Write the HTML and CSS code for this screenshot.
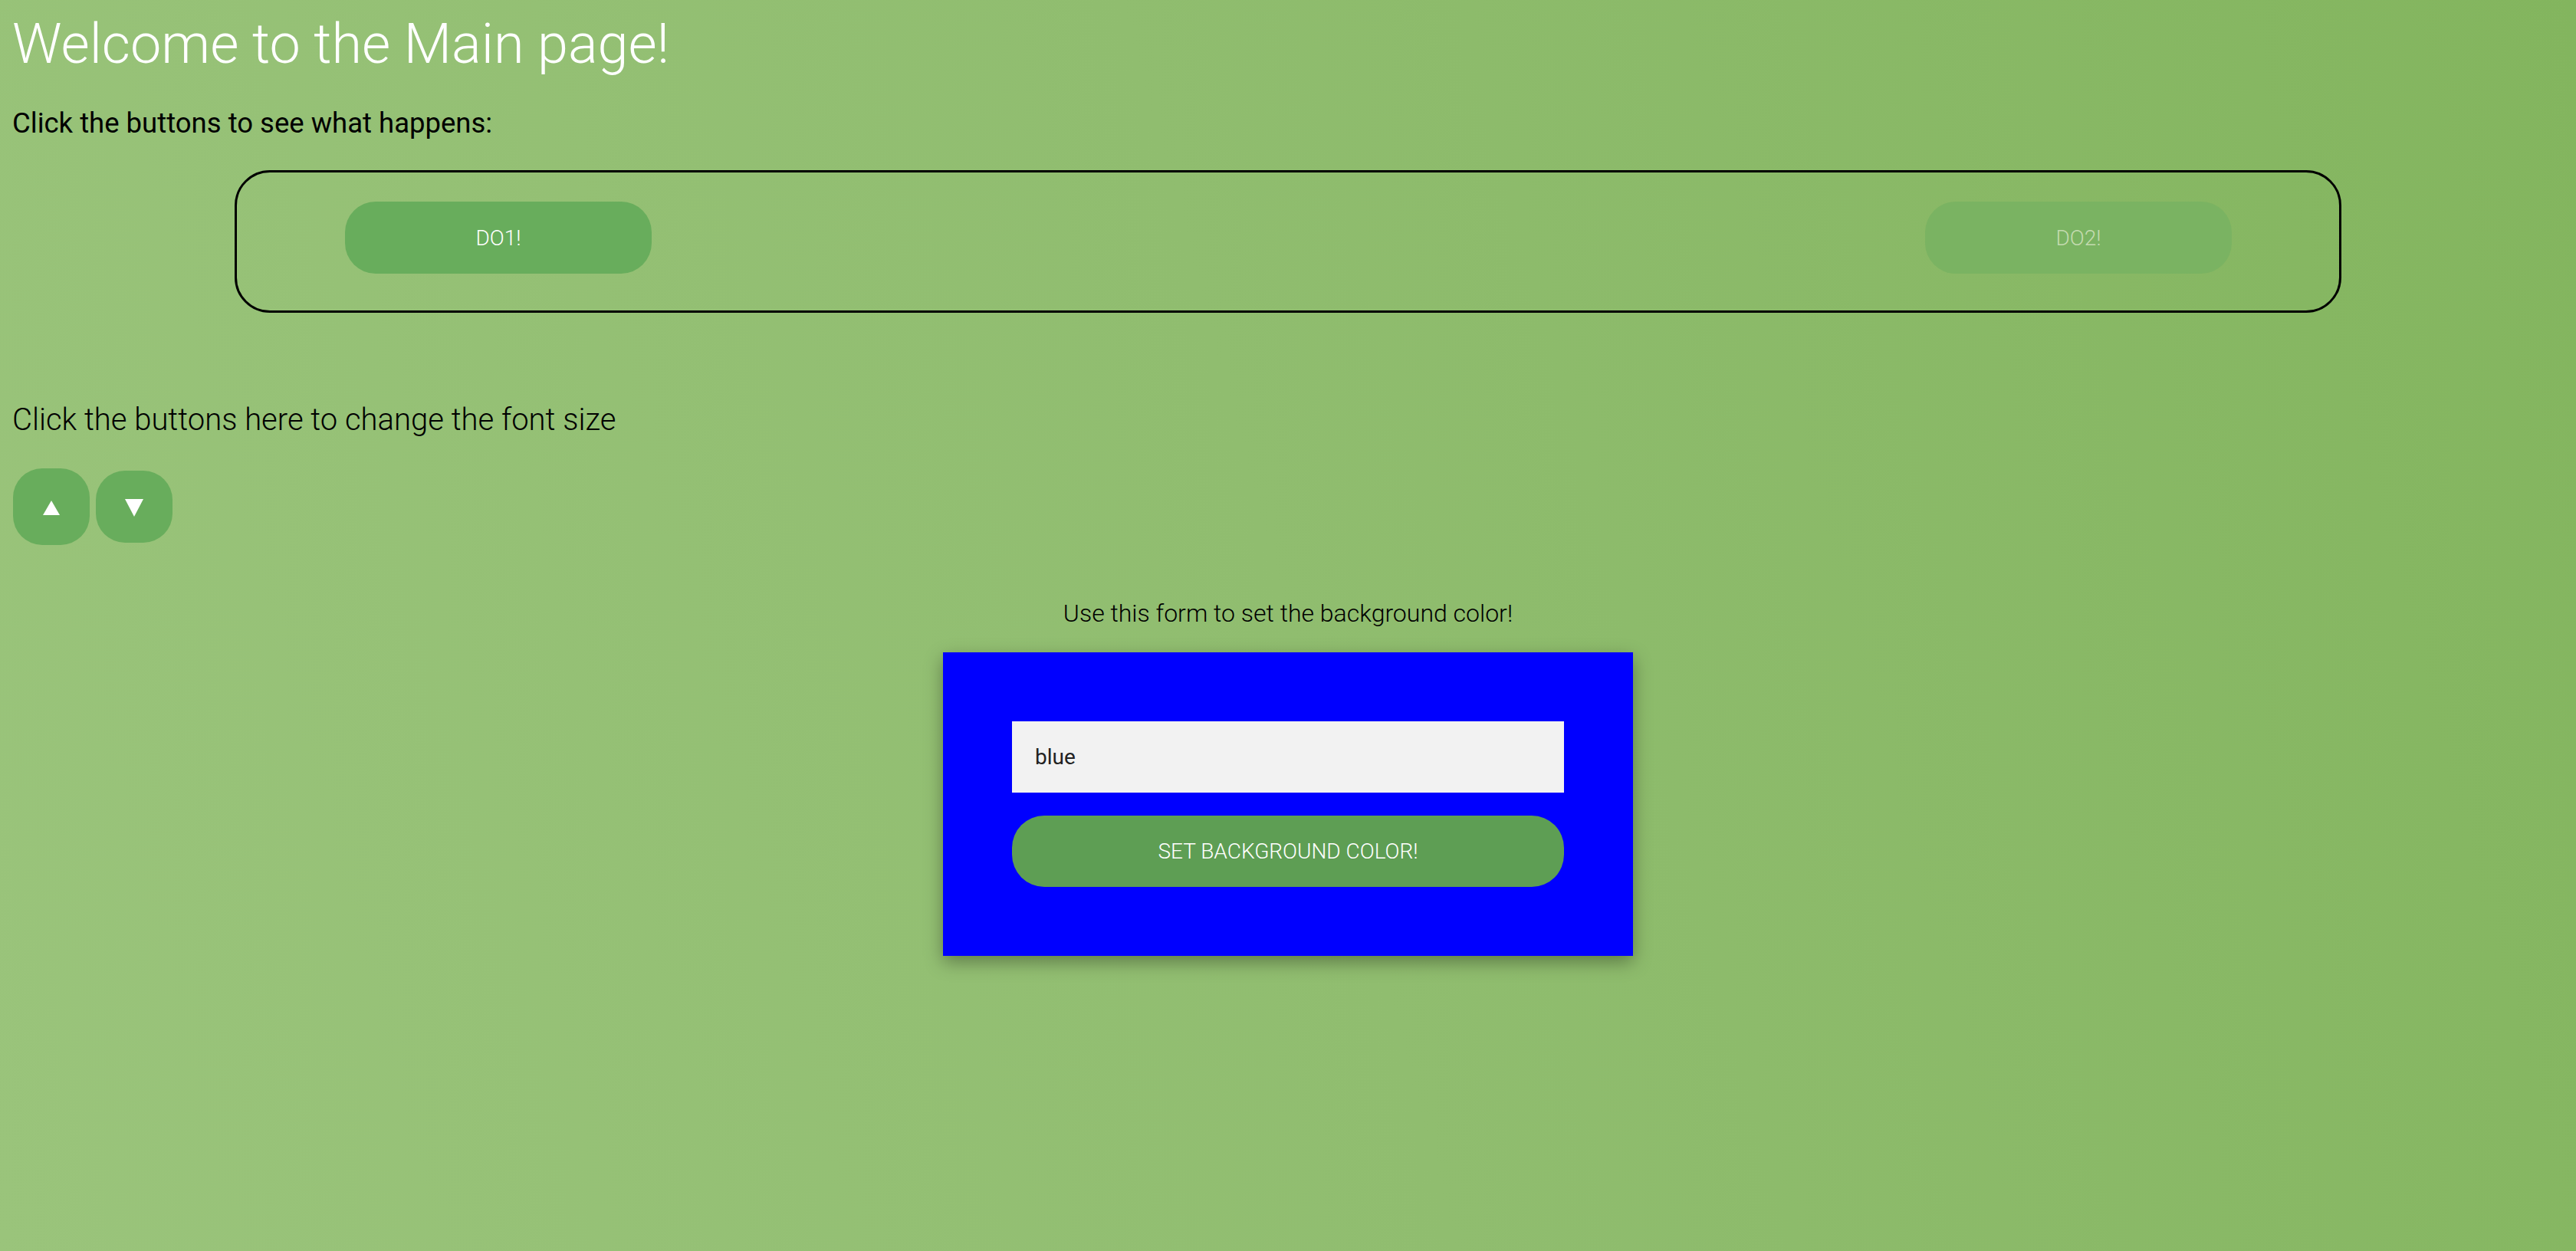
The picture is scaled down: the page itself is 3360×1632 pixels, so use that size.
FILE: index.html
```html
<!DOCTYPE html>
<html lang="en">
<head>
<meta charset="utf-8">
<title>Main page</title>
<link rel="stylesheet" href="styles.css">
</head>
<body>
<main class="page">
  <h1 class="title">Welcome to the Main page!</h1>
  <p class="intro">Click the buttons to see what happens:</p>
  <div class="do-box">
    <button class="do-btn">DO1!</button>
    <button class="do-btn do-btn--disabled" disabled>DO2!</button>
  </div>
  <p class="font-label">Click the buttons here to change the font size</p>
  <div class="size-btns">
    <button class="size-btn size-btn--up" aria-label="Increase font size">
      <svg width="22" height="19" viewBox="0 0 22 19"><polygon points="11,0 22,19 0,19" fill="#fff"/></svg>
    </button>
    <button class="size-btn size-btn--down" aria-label="Decrease font size">
      <svg width="24" height="23" viewBox="0 0 24 23"><polygon points="0,0 24,0 12,23" fill="#fff"/></svg>
    </button>
  </div>
  <section class="color-section">
    <p class="form-label">Use this form to set the background color!</p>
    <form class="color-form">
      <input class="color-input" type="text" value="blue">
      <button class="color-btn" type="button">SET BACKGROUND COLOR!</button>
    </form>
  </section>
</main>
</body>
</html>
```

FILE: styles.css
```css
html, body {
  margin: 0;
  padding: 0;
}
body {
  min-height: 1632px;
  background: linear-gradient(75deg, #9ac47b 0%, #90bd6f 50%, #83b55e 100%);
  font-family: Roboto, "Noto Sans", sans-serif;
  color: #000;
}
.page {
  padding: 16px 16px 0 16px;
  display: flex;
  flex-direction: column;
}
.title {
  margin: 0;
  font-size: 72px;
  font-weight: 300;
  color: #fff;
  line-height: 84px;
}
.intro {
  margin: 40px 0 0 0;
  font-size: 36.5px;
  font-weight: 400;
  line-height: 42px;
}
.do-box {
  align-self: center;
  box-sizing: border-box;
  width: 2748px;
  height: 186px;
  margin-top: 40px;
  border: 3px solid #000;
  border-radius: 46px;
  padding: 38px 140px 0 141px;
  display: flex;
  justify-content: space-between;
  align-items: flex-start;
}
.do-btn {
  width: 400px;
  height: 94px;
  border: none;
  border-radius: 40px;
  background: #68ad5c;
  color: #fff;
  font-family: Roboto, sans-serif;
  font-weight: 300;
  font-size: 28px;
  padding: 0;
}
.do-btn--disabled {
  background: #7ab362;
  color: #c4dbb0;
}
.font-label {
  margin: 116px 0 0 0;
  font-size: 40px;
  font-weight: 300;
  line-height: 47px;
}
.size-btns {
  margin-top: 40px;
  display: flex;
  align-items: center;
  gap: 8px;
  height: 100px;
}
.size-btn {
  border: none;
  background: #68ad5c;
  border-radius: 38px;
  padding: 0;
  display: flex;
  align-items: center;
  justify-content: center;
}
.size-btn--up {
  width: 100px;
  height: 100px;
  margin-left: 1px;
}
.size-btn--up svg {
  margin-left: -1px;
  margin-top: 2px;
}
.size-btn--down {
  width: 100px;
  height: 94px;
}
.size-btn--down svg {
  margin-top: 2px;
}
.color-section {
  display: flex;
  flex-direction: column;
  align-items: center;
  margin-top: 70px;
}
.form-label {
  margin: 0;
  font-size: 32px;
  font-weight: 300;
  line-height: 38px;
}
.color-form {
  margin-top: 32px;
  width: 900px;
  box-sizing: border-box;
  padding: 90px;
  background: #0000ff;
  box-shadow: 0 8px 22px rgba(0, 0, 0, 0.35);
  display: flex;
  flex-direction: column;
  gap: 30px;
}
.color-input {
  box-sizing: border-box;
  height: 93px;
  width: 720px;
  border: none;
  background: #f2f2f2;
  padding: 0 30px;
  font-family: Roboto, sans-serif;
  font-size: 28px;
  color: #222;
  outline: none;
}
.color-btn {
  height: 93px;
  width: 720px;
  border: none;
  border-radius: 42px;
  background: #5e9e54;
  color: #fff;
  font-family: Roboto, sans-serif;
  font-weight: 300;
  font-size: 28px;
  padding: 0;
}
```
